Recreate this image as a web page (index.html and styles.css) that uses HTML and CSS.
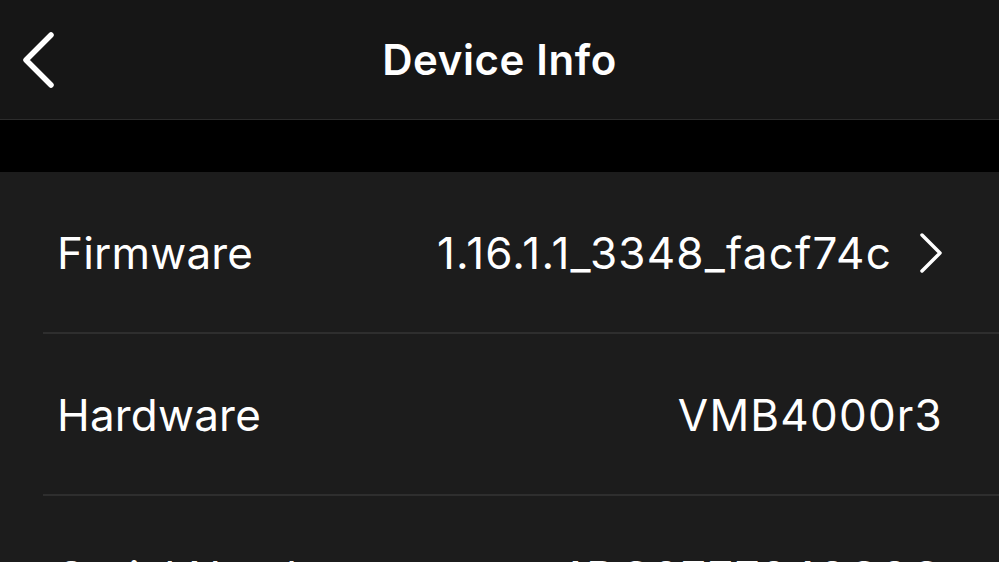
FILE: index.html
```html
<!doctype html>
<html lang="en">
<head>
    <meta charset="UTF-8">
    <title>Device Info</title>
    <link rel="stylesheet" href="styles.css">
</head>
<body>
<div id="app">
    <header class="nav-bar">
        <div class="nav-left">
            <svg class="back-icon" width="40" height="64" viewBox="0 0 40 64">
                <path d="M33 6 L8 31 L33 56" fill="none" stroke="#fff" stroke-width="5.5" stroke-linecap="round" stroke-linejoin="round"/>
            </svg>
        </div>
        <h1 class="nav-title">Device Info</h1>
        <div class="nav-right"></div>
    </header>

    <div class="gap-band"></div>

    <!-- Info list -->
    <ul class="info-list">
        <li class="info-row">
            <div class="info-inner">
                <span class="info-label">Firmware</span>
                <span class="info-value">1.16.1.1_3348_facf74c</span>
                <svg class="chevron" width="24" height="40" viewBox="0 0 24 40">
                    <path d="M3 2 L21 20 L3 38" fill="none" stroke="#fff" stroke-width="3.5" stroke-linecap="round" stroke-linejoin="round"/>
                </svg>
            </div>
        </li>
        <li class="info-row">
            <div class="info-inner">
                <span class="info-label">Hardware</span>
                <span class="info-value">VMB4000r3</span>
            </div>
        </li>
        <li class="info-row">
            <div class="info-inner">
                <span class="info-label">Serial Number</span>
                <span class="info-value">4DC8777840C0C</span>
            </div>
        </li>
    </ul>
</div>
</body>
</html>
```

FILE: styles.css
```css
html, body {
    margin: 0;
    padding: 0;
    height: 100%;
    overflow: hidden;
}

body {
    background-color: #1c1c1c;
    color: #fff;
    font-family: "Inter", "Liberation Sans", sans-serif;
}

/* Top navigation bar */
.nav-bar {
    display: grid;
    grid-template-columns: 1fr auto 1fr;
    align-items: center;
    height: 119px;
    background-color: #161616;
    border-bottom: 1px solid #2c2c2c;
}

.nav-left {
    display: flex;
    align-items: center;
    padding-left: 18px;
}

.back-icon {
    display: block;
    margin-top: 2px;
}

.nav-title {
    margin: 0;
    font-size: 42px;
    font-weight: 600;
    letter-spacing: 0.6px;
}

/* Black strip between header and list */
.gap-band {
    height: 52px;
    background-color: #000;
}

.info-list {
    list-style: none;
    margin: 0;
    padding: 0;
}

.info-row {
    padding-left: 43px;
}

.info-inner {
    display: flex;
    align-items: center;
    height: 158px;
    padding: 2px 56px 0 14px;
    border-bottom: 2px solid #2e2e2e;
    font-size: 44px;
}

.info-label {
    flex: 1;
    letter-spacing: 0.2px;
}

.info-value {
    white-space: nowrap;
    letter-spacing: 1.2px;
}

.chevron {
    display: block;
    margin-left: 27px;
}
```
